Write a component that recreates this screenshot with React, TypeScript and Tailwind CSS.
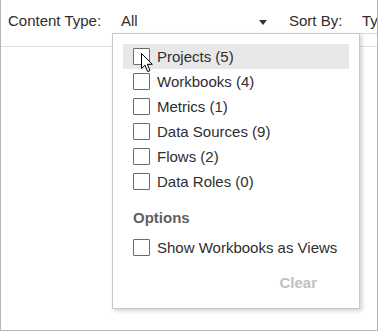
import React from "react";

const contentTypes = [
  { id: "projects", label: "Projects (5)", hover: true },
  { id: "workbooks", label: "Workbooks (4)" },
  { id: "metrics", label: "Metrics (1)" },
  { id: "datasources", label: "Data Sources (9)" },
  { id: "flows", label: "Flows (2)" },
  { id: "dataroles", label: "Data Roles (0)" },
];

const Checkbox = () => (
  <span className="block h-[17px] w-[17px] shrink-0 rounded-[1px] border border-[#6b6b6b] bg-white" />
);

const Cursor = () => (
  <svg
    width="13"
    height="20"
    viewBox="0 0 13 20"
    className="pointer-events-none absolute left-[140px] top-[53px]"
  >
    <path
      d="M0.5 0.5 L0.5 15.5 L4 12.2 L6.6 18.6 L9 17.6 L6.4 11.3 L11.3 11.3 Z"
      fill="#ffffff"
      stroke="#000000"
      strokeWidth="1"
      strokeLinejoin="round"
    />
  </svg>
);

const App = () => {
  return (
    <div className="relative h-[331px] w-[378px] overflow-hidden border-x border-b border-[#b5b5b5] bg-white font-['Liberation_Sans',Arial,sans-serif] text-[15px] text-[#2e2e2e]">
      <div className="flex h-[47px] items-start whitespace-nowrap border-b border-[#e1e1e1] pl-[7px] pt-[11px] leading-[20px]">
        <span className="w-[113px] shrink-0">Content Type:</span>
        <span className="w-[138px] shrink-0">All</span>
        <span className="mt-[9px] h-0 w-0 shrink-0 border-x-[4px] border-t-[5px] border-x-transparent border-t-[#333333]" />
        <span className="ml-[22px] w-[73px] shrink-0">Sort By:</span>
        <span>Type</span>
      </div>

      <div className="absolute left-[358px] top-[33px] h-px w-[20px] bg-[#d6d6d6]" />

      <div className="absolute left-[111px] top-[33px] h-[276px] w-[248px] border border-[#c9c9c9] bg-white px-[10px] pt-[10px] shadow-[2px_2px_4px_rgba(0,0,0,0.18)]">
        <ul className="flex flex-col">
          {contentTypes.map((item) => (
            <li
              key={item.id}
              className={`flex h-[25px] items-center gap-[7px] pl-[10px] leading-[25px] ${
                item.hover ? "bg-[#e8e8e8]" : ""
              }`}
            >
              <Checkbox />
              <span>{item.label}</span>
            </li>
          ))}
        </ul>

        <h4 className="mt-[14px] pl-[10px] text-[15px] font-bold leading-[20px] text-[#5f5f5f]">
          Options
        </h4>
        <div className="mt-[7px] flex h-[25px] items-center gap-[7px] pl-[10px] leading-[25px]">
          <Checkbox />
          <span>Show Workbooks as Views</span>
        </div>

        <div className="mt-[13px] flex justify-end pr-[32px]">
          <button className="text-[15px] font-bold leading-[20px] text-[#c0c0c0]">
            Clear
          </button>
        </div>
      </div>

      <Cursor />
    </div>
  );
};

export default App;
